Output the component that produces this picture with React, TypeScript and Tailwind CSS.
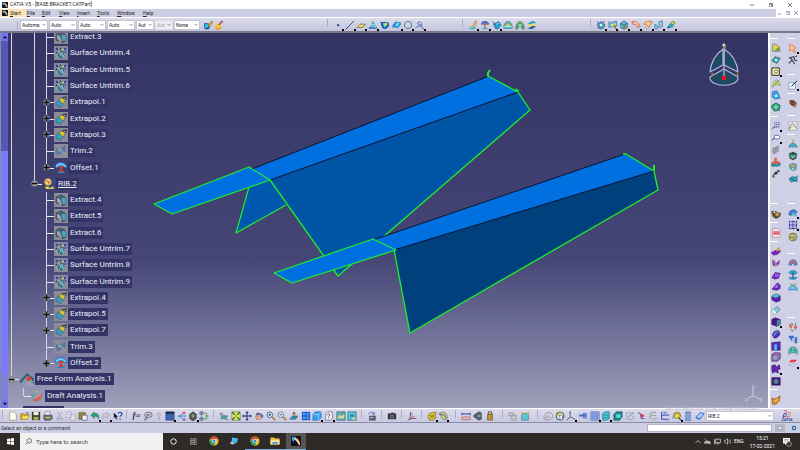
import type { ReactNode } from "react";
import clsx from "clsx";

// ====================================
// Glyphs, all drawn on a 12x12 grid
// ====================================
const glyphs: Record<string, ReactNode> = {
   // render style
   painter: (
      <>
         <path d="M1 4h5l3 2-2 5H2z" fill="#1c4f9e" />
         <path d="M2 5l4 0 1 3-4 2z" fill="#35c8e8" />
         <path d="M6 6l5-5 1 1-4 6z" fill="#e3b52c" stroke="#5d4200" strokeWidth=".5" />
      </>
   ),
   wizard: (
      <>
         <circle cx="5" cy="8" r="3.4" fill="#f2c62f" />
         <path d="M2 10c2 2 5 1 6-1" stroke="#d66a1b" fill="none" />
         <path d="M6 6l4-5" stroke="#c0392b" strokeWidth="1.6" />
         <path d="M9 1l2 2" stroke="#7a4cd0" />
      </>
   ),
   // wireframe
   point: <rect x="5" y="5" width="2.4" height="2.4" fill="#12448c" />,
   line: <path d="M1 11L11 1" stroke="#17386e" strokeWidth="1" />,
   plane: (
      <path d="M1 9l4-4h6l-3 4z" fill="#f0de6c" stroke="#4d4a20" strokeWidth=".7" />
   ),
   extrude: (
      <>
         <path d="M1 10c3-2 5 1 10-1" stroke="#1c5fa8" strokeWidth="1.6" fill="none" />
         <path d="M3 7c2-1 4 1 6-1M4 4c1-1 3 1 4 0" stroke="#2fbcd6" strokeWidth="1.7" fill="none" />
         <path d="M6 1v4" stroke="#7e8ea0" />
      </>
   ),
   sweep: (
      <>
         <path d="M1 3l4-1 5 1 1 4-4 4-4-1z" fill="#1c55b4" />
         <path d="M3 4l4 0 1 3-3 2z" fill="#3fe0d0" />
         <circle cx="7" cy="5" r="1.6" fill="#f2e53c" />
         <path d="M1 2l2 6" stroke="#163a52" />
      </>
   ),
   fill: (
      <>
         <path d="M1 7l4-4 5-1 1 3-4 5-4-1z" fill="#2a8fe4" />
         <path d="M4 6l3-3 2 1-3 4z" fill="#5ef0e4" />
         <path d="M1 9c0-3 2-6 5-7" stroke="#1b3f9a" fill="none" />
      </>
   ),
   circle: <circle cx="6" cy="6" r="4.4" fill="none" stroke="#4a7d92" strokeWidth="1.1" />,
   spline: (
      <path d="M1 10c0-4 6-1 7-4S4 1 3 4c0 2 4 1 5 3s1 4 3 4" fill="none" stroke="#3f5fb0" strokeWidth="1.1" />
   ),
   // shape tools
   join: (
      <>
         <path d="M1 10l3-3 6 1-2 3H2z" fill="#39b8c8" />
         <path d="M5 8l4-7 2 1-3 6z" fill="#f0a868" stroke="#a05a20" strokeWidth=".4" />
         <path d="M1 8l3 1 5-2" stroke="#e8e070" fill="none" />
      </>
   ),
   offset: (
      <>
         <path d="M1 5c1-5 9-5 10 0l-2 1c-1-3-5-3-6 0z" fill="#3d68c8" />
         <path d="M3 11c1-3 5-3 6 0z" fill="#2fb6d0" />
         <path d="M6 9V4M4.5 6L6 4l1.500 2" stroke="#e04a1c" strokeWidth="1.300" fill="none" />
      </>
   ),
   bucket: (
      <>
         <path d="M2 5l6-3 3 4-4 5-3-1z" fill="#24a5cc" stroke="#15506e" strokeWidth=".7" />
         <path d="M1 2l3 4" stroke="#20406a" />
         <path d="M5 5l3-1" stroke="#8ef0f4" />
      </>
   ),
   dome: (
      <>
         <path d="M1 10c-1-11 11-11 10 0z" fill="#38c4cc" stroke="#24606e" strokeWidth=".6" />
         <path d="M3 7c0-4 6-4 6 0z" fill="#f4de55" />
         <path d="M3 6c1-2 5-2 6 0" stroke="#e05a28" fill="none" />
         <path d="M1 8h10" stroke="#c8f4f4" />
      </>
   ),
   dome2: (
      <>
         <path d="M1 11c0-12 10-12 10 0l-3-1c0-4-4-4-4 0z" fill="#5aa864" stroke="#286048" strokeWidth=".6" />
         <path d="M4 7c0-3 4-3 4 0z" fill="#80e4ec" />
      </>
   ),
   layers: (
      <>
         <path d="M1 4l6-3 4 2-6 3z" fill="#2a9fd0" />
         <path d="M1 7l6-3 4 1-6 4z" fill="#f2e048" />
         <path d="M1 10l6-3 4 1-6 3z" fill="#1b5fae" />
      </>
   ),
   gearbox: (
      <>
         <circle cx="6" cy="6.500" r="4.200" fill="#3ea7b8" stroke="#2b4468" strokeDasharray="2 1" />
         <path d="M1 2l3 2M10 1L8 4M2 10l3-2" stroke="#7a50c8" strokeWidth="1.200" />
         <circle cx="6" cy="6" r="1.500" fill="#e8ffff" />
      </>
   ),
   patch: (
      <>
         <path d="M1 2l4 1 5-2 1 6-4 1-6 1z" fill="#64b4e8" stroke="#3460b0" strokeWidth=".6" />
         <path d="M3 4l3 1 3-2v4l-5 1z" fill="#d4e868" />
         <path d="M7 6l3 5" stroke="#a06820" strokeWidth="1.500" />
      </>
   ),
   cubeLens: (
      <>
         <path d="M2 4l4-3 4 3v5l-4 2-4-2z" fill="#58c0d4" stroke="#1e4e70" strokeWidth=".8" />
         <path d="M2 4l4 2 4-2M6 6v5" stroke="#1e4e70" strokeWidth=".8" fill="none" />
         <path d="M7 7l3 3" stroke="#d07828" strokeWidth="1.500" />
      </>
   ),
   ribbon: (
      <path d="M1 2c4-1 8 0 10 6l-3 1c-1-3-2-4-6-4z" fill="#f2c4a4" stroke="#c04440" strokeWidth=".8" />
   ),
   ribbon2: (
      <>
         <path d="M1 5c2-4 6-4 10-3L7 9C6 7 4 5 1 5z" fill="#f6cf84" stroke="#d0483c" strokeWidth=".8" />
         <path d="M3 9l2 2" stroke="#48a868" />
      </>
   ),
   mirror: (
      <path d="M1 10V5l3 2v4zM6 9V2l4-1v7z" fill="#7fd4e8" stroke="#31588c" strokeWidth=".7" />
   ),
   curveFit: (
      <>
         <path d="M1 9l4-5 6-1-3 6-4 1z" fill="#2f9fd0" />
         <path d="M5 5l3-4 3 2-3 3z" fill="#b8d850" stroke="#1d5030" strokeWidth=".5" />
         <circle cx="3" cy="9" r="1" fill="#1c2f60" />
      </>
   ),
   // standard
   newFile: <path d="M2 1h5l3 3v7H2z" fill="#fffff0" stroke="#7f7f60" strokeWidth=".7" />,
   open: (
      <>
         <path d="M1 10V3h3l1 1h4v2" fill="#e8bb38" stroke="#6e5514" strokeWidth=".6" />
         <path d="M1 10l2-5h9l-3 5z" fill="#f8d84c" stroke="#7a5c10" strokeWidth=".6" />
         <path d="M7 2c2-1 3 0 3 2" stroke="#333" strokeWidth=".7" fill="none" />
      </>
   ),
   save: (
      <>
         <path d="M1 1h10v10H1z" fill="#3a4028" />
         <path d="M3 1h6v4H3z" fill="#eceee0" />
         <path d="M3 7h6v4H3z" fill="#a8a85c" />
      </>
   ),
   print: (
      <>
         <path d="M3 1h6l-1 4H2z" fill="#fff" stroke="#444" strokeWidth=".6" />
         <path d="M1 5h10v4l-2 2H2L1 9z" fill="#6c7078" stroke="#28303a" strokeWidth=".6" />
         <path d="M3 8h6" stroke="#e6d84a" strokeWidth="1.200" />
      </>
   ),
   cut: (
      <>
         <path d="M3 1l4 7M8 1L4 8" stroke="#9b9bac" strokeWidth=".9" />
         <circle cx="3.500" cy="9.500" r="1.400" fill="none" stroke="#9b9bac" />
         <circle cx="8" cy="9.500" r="1.400" fill="none" stroke="#9b9bac" />
      </>
   ),
   copy: (
      <path d="M1 1h5v7H1zM5 4h6v7H5z" fill="#e3e3ee" stroke="#9a9aac" strokeWidth=".7" />
   ),
   paste: (
      <>
         <path d="M1 2h8v8H1z" fill="#a8842c" stroke="#54401a" strokeWidth=".6" />
         <path d="M3 1h4v2H3z" fill="#888" />
         <path d="M5 5h6v6H5z" fill="#f4f4f8" stroke="#2c4894" strokeWidth=".7" />
      </>
   ),
   undo: (
      <path d="M1 5l4-4v2c4-1 7 2 5 7 0-3-2-4-5-3v2z" fill="#2f9f74" stroke="#1d6950" strokeWidth=".5" />
   ),
   redo: (
      <path d="M11 5L7 1v2C3 2 0 5 2 10c0-3 2-4 5-3v2z" fill="#c8c8d4" stroke="#9898a8" strokeWidth=".6" />
   ),
   help: (
      <>
         <path d="M1 2l5 5-2 0 1 3-1.500 0-1-3L1 9z" fill="#10142c" />
         <path d="M6 3c0-2 5-2 5 0 0 2-2.500 2-2.500 4M8.500 9v1.500" stroke="#2c50b0" strokeWidth="1.500" fill="none" />
      </>
   ),
   // knowledge
   comment: (
      <>
         <ellipse cx="6.500" cy="4.500" rx="4.500" ry="3.200" fill="#dcdce8" stroke="#3c3c48" strokeWidth=".8" />
         <path d="M4 7l-2 4 4-3M4 4h5M4 5.500h4" stroke="#3c3c48" strokeWidth=".7" fill="none" />
      </>
   ),
   bulbOff: (
      <>
         <circle cx="6" cy="4" r="2.300" fill="#c6c6d4" stroke="#a8a8b8" strokeWidth=".6" />
         <path d="M5 7h2v4H5z" fill="#b0b0c0" />
      </>
   ),
   table: (
      <>
         <path d="M1 1h10v10H1z" fill="#3c5fae" stroke="#242e5c" strokeWidth=".6" />
         <path d="M1 1h10v2.500H1z" fill="#1f2f4c" />
         <path d="M2 6h8M2 8.500h8M4.500 4v7" stroke="#4f72bc" strokeWidth=".5" />
      </>
   ),
   treeGraph: (
      <>
         <path d="M3 6l4-3M3 6h5M3 6l4 4" stroke="#3468b8" strokeWidth=".9" />
         <path d="M1 5h3v2.500H1zM8 5h3v2H8z" fill="#3fa0d4" />
         <path d="M7 1h3v2.500H7z" fill="#d04a80" />
         <path d="M7 9h3v2.500H7z" fill="#8058c0" />
      </>
   ),
   lockCube: (
      <>
         <path d="M2 4l4-3 4 3v5l-4 3-4-3z" fill="#4c5450" stroke="#20262a" strokeWidth=".6" />
         <circle cx="6" cy="6" r="2" fill="#9a9c80" />
      </>
   ),
   structure: (
      <>
         <path d="M1 1h4v3H1zM1 8h4v3H1z" fill="#68a4a0" stroke="#3e5860" strokeWidth=".6" />
         <path d="M3 4v4M6 2.500h3v7H6" stroke="#606878" strokeWidth=".8" fill="none" />
         <path d="M8 5h3v2.500H8z" fill="#60b060" />
      </>
   ),
   // view
   fly: (
      <>
         <path d="M1 2l3 3 7 1-3 2 3 3-5-2-4 1 1-3z" fill="#40a4ac" stroke="#466484" strokeWidth=".5" />
         <path d="M1 3h4" stroke="#c05c60" />
      </>
   ),
   fitAll: (
      <>
         <path d="M1 1h10v10H1z" fill="#e8e860" stroke="#507038" strokeWidth=".7" />
         <path d="M1.500 1.500l3 3M10.500 1.500l-3 3M1.500 10.500l3-3M10.500 10.500l-3-3" stroke="#1d5c38" strokeWidth="1.300" />
         <circle cx="6" cy="6" r="1" fill="#2f7448" />
      </>
   ),
   pan: (
      <path d="M6 0l2 2.500H6.700v2.800h2.800V4L12 6 9.500 8V6.700H6.700v2.800H8L6 12 4 9.500h1.300V6.700H2.500V8L0 6l2.500-2v1.300h2.800V2.500H4z" fill="#263c74" />
   ),
   rotate: (
      <>
         <path d="M2 4c2-3 7-2 8 1l1-1v4H8l1-1C7 4 5 4 4 6z" fill="#60688c" />
         <path d="M2 6h6c2 1 1 4-1 4H3z" fill="#e8b0a0" stroke="#9c4c48" strokeWidth=".6" />
      </>
   ),
   zoomIn: (
      <>
         <circle cx="4.500" cy="4.500" r="3.300" fill="#e8f4fc" stroke="#2c4c88" />
         <path d="M3 4.500h3M4.500 3v3" stroke="#163060" />
         <path d="M7 7l4 4" stroke="#a87830" strokeWidth="1.800" />
      </>
   ),
   zoomOut: (
      <>
         <circle cx="4.500" cy="4.500" r="3.300" fill="#e8f4fc" stroke="#587088" />
         <path d="M3 4.500h3" stroke="#163060" />
         <path d="M7 7l4 4" stroke="#a87830" strokeWidth="1.800" />
      </>
   ),
   normal: (
      <>
         <path d="M1 10l3-4h7l-3 4z" fill="#2c98b4" stroke="#20506c" strokeWidth=".5" />
         <path d="M6 8V2M4 4l2-3 2 3" stroke="#8c6038" strokeWidth="1.200" fill="none" />
      </>
   ),
   multiView: (
      <>
         <path d="M1 1h10v10H1z" fill="#2348c8" />
         <path d="M2 2h3.500v3.500H2zM6.500 2H10v3.500H6.500zM2 6.500h3.500V10H2zM6.500 6.500H10V10H6.500z" fill="#3fa0f0" />
      </>
   ),
   cube: (
      <>
         <path d="M1 4l3-3h7v7l-3 3H1z" fill="#38a0f0" stroke="#1c54b0" strokeWidth=".6" />
         <path d="M1 4h7v7M8 4l3-3" stroke="#bfe6ff" strokeWidth=".8" fill="none" />
      </>
   ),
   cubeQuery: (
      <>
         <path d="M2 3l2-2h6v8l-2 2H2z" fill="#f2f2fa" stroke="#4c4c64" strokeWidth=".7" />
         <path d="M4 5c0-2 3-1.500 3 0 0 1-1.500 1-1.500 2M5.500 8v1" stroke="#3c3c88" fill="none" />
      </>
   ),
   photo: (
      <>
         <path d="M1 1h10v10H1z" fill="#50b8c8" stroke="#405870" strokeWidth=".8" />
         <path d="M2 8l3-4 2 2 3-2v5H2z" fill="#dcd88c" />
         <path d="M5 5l4-3" stroke="#a05c30" />
      </>
   ),
   photo2: (
      <>
         <path d="M1 1h10v10H1z" fill="#58c8dc" stroke="#405870" strokeWidth=".8" />
         <path d="M3 7c1-4 5-4 6 0z" fill="#2c8890" />
         <path d="M6 8h4v2H6z" fill="#e6dc80" />
      </>
   ),
   swapCube: (
      <>
         <path d="M3 6h7v5H3z" fill="#686878" stroke="#2c2c3c" strokeWidth=".6" />
         <path d="M2 4c0-3 6-3 7-1M8 1l1 3-3 0" stroke="#4868b0" fill="none" />
         <path d="M4 8h3" stroke="#e8e8f0" />
      </>
   ),
   camera: (
      <>
         <path d="M1 3h3l1-1h3l1 1h2v7H1z" fill="#34343c" />
         <circle cx="6" cy="6.500" r="2.300" fill="#8a8a98" />
         <circle cx="6" cy="6.500" r="1" fill="#202028" />
      </>
   ),
   axisRed: (
      <>
         <path d="M4 1v8h7M1 11l3-2" stroke="#6c6070" strokeWidth="1.200" fill="none" />
         <path d="M6 2v5h3" stroke="#a86870" fill="none" />
         <circle cx="4" cy="9" r="1.200" fill="#9c4048" />
      </>
   ),
   material: (
      <>
         <path d="M1 6c1-3 3-4 5-4l5-1-1 4 1 3-4 3H3z" fill="#dcc838" stroke="#5c5420" strokeWidth=".7" />
         <path d="M3 5l6 3M4 8l5-4" stroke="#6c6424" />
      </>
   ),
   material2: (
      <>
         <path d="M1 3l6-2 4 4v4l-4 2-3-4z" fill="#ccd46c" stroke="#48546c" strokeWidth=".7" />
         <path d="M2 4l6 1 2 4" stroke="#6858c0" strokeWidth="1.200" fill="none" />
      </>
   ),
   measure: (
      <>
         <path d="M1 2v3M11 2v3M1 3.500h10" stroke="#2c3ca0" strokeWidth="1.100" />
         <path d="M1 7h10v3.500H1z" fill="#e8b0ac" stroke="#8c5054" strokeWidth=".6" />
      </>
   ),
   measureItem: (
      <>
         <path d="M1 5l6-4 3 1v8l-3 1-6-4z" fill="#5c6068" stroke="#2c3038" strokeWidth=".6" />
         <path d="M6 5l4 1-4 1z" fill="#b8e4e0" />
      </>
   ),
   weight: (
      <>
         <path d="M4 1h4v3H4z" fill="none" stroke="#504018" />
         <path d="M3 4h6v7H3z" fill="#bc9430" stroke="#504018" strokeWidth=".6" />
      </>
   ),
   boxesOff: (
      <path d="M1 2h6v4H1zM4 5h6v6H4z" fill="#c8c8c8" stroke="#94949c" strokeWidth=".8" />
   ),
   catalog: (
      <>
         <path d="M2 3h8v8H2z" fill="#5cc8d4" stroke="#3c6470" strokeWidth=".7" />
         <path d="M1 1h3v3H1zM8 1h3v3H8z" fill="#d8b868" />
      </>
   ),
   swirl: (
      <path d="M6 6c1-1 2 1 0 2S2 7 3 4s6-3 8 0-1 7-5 7-5-2-5-4" fill="none" stroke="#8c8c98" strokeWidth="1.100" />
   ),
   palette: (
      <>
         <circle cx="6" cy="6" r="4.800" fill="#cfe6dc" stroke="#243c58" />
         <path d="M2 6c1-4 4-5 7-3" stroke="#b49c2c" strokeWidth="1.400" fill="none" />
         <path d="M5 5l2 6h2V6z" fill="#fff" stroke="#304048" strokeWidth=".6" />
      </>
   ),
   axes: (
      <path d="M5 1v6l6 3M5 7l-4 4M4 2l1-1 1 1" stroke="#4c4c54" strokeWidth="1" fill="none" />
   ),
   swap: (
      <>
         <path d="M1 4h5l0-2 5 0v7l-5 0V7H1z" fill="#7094d8" />
         <path d="M2 5.500h7M7 3v5" stroke="#3c58b4" />
      </>
   ),
   grid: (
      <path d="M1 1h10v10H1zM1 3.500h10M1 6h10M1 8.500h10M3.500 1v10M6 1v10M8.500 1v10" fill="#ccdcfc" stroke="#4064c0" strokeWidth=".8" />
   ),
   cylinder: (
      <>
         <path d="M2 3l3-2h5v8l-3 2H2z" fill="#44c4d0" stroke="#246870" strokeWidth=".7" />
         <path d="M2 5h8M2 8h8" stroke="#1c7c88" strokeWidth=".6" />
      </>
   ),
   tealBox: (
      <>
         <path d="M1 4l3-3h7v6l-3 4H1z" fill="#1c8c94" stroke="#104c54" strokeWidth=".7" />
         <path d="M4 4h5v4H4z" fill="#68dce0" />
      </>
   ),
   dashSquare: (
      <>
         <path d="M2 2h8v8H2z" fill="none" stroke="#686c78" strokeWidth=".8" strokeDasharray="1.500 1.500" />
         <path d="M4 8l5-6" stroke="#3c8ca0" />
      </>
   ),
   branch: (
      <>
         <path d="M1 1l4 4h3M5 5v4h4" stroke="#3c58b4" strokeWidth="1.200" fill="none" />
         <path d="M3 2l6 4-4 2z" fill="#d42c3c" />
      </>
   ),
   sheetsOff: (
      <path d="M2 5c0-4 5-4 8-3M2 9c0-4 5-5 8-3M5 11c1-2 3-2 6-2" stroke="#a4a8a4" strokeWidth="1.500" fill="none" />
   ),
   listTree: (
      <>
         <path d="M2 1v9h4M2 5h4" stroke="#3c50b0" strokeWidth="1.200" fill="none" />
         <path d="M4 1h4v2H4zM6 4h5v2H6zM6 9h5v2H6z" fill="#6c84dc" />
      </>
   ),
   lensYellow: (
      <>
         <circle cx="6" cy="5" r="4" fill="#e8d834" stroke="#787428" strokeWidth=".7" />
         <path d="M1 9c1-7 7-9 10-2" stroke="#6858b0" fill="none" />
         <path d="M8 8l3 3" stroke="#303870" strokeWidth="1.300" />
      </>
   ),
   stack: (
      <path d="M3 1h6v2.500H3zM3 5h6v2.500H3zM3 9h6v2.500H3z" fill="#80a8e8" stroke="#4460b0" strokeWidth=".6" />
   ),
   eraser: (
      <>
         <path d="M1 8l5-6 5 1-5 7z" fill="#a4ccf8" stroke="#2c58c4" strokeWidth=".9" />
         <path d="M1 8l5 2" stroke="#2c58c4" />
      </>
   ),
   // right column
   yellowSolid: (
      <>
         <path d="M2 2l3-1 5 4 1 5-9 0z" fill="#e4d838" stroke="#6858a0" strokeWidth=".8" />
         <path d="M4 9l6 0-1-4z" fill="#409c48" />
      </>
   ),
   diamondTeal: (
      <>
         <path d="M1 7l4-5 6 2-4 6z" fill="#2ca8c8" stroke="#1c5878" strokeWidth=".8" />
         <circle cx="6" cy="6" r="1.600" fill="#f4ecb0" />
         <path d="M5 1v2M7 9v2" stroke="#c08020" />
      </>
   ),
   frameYellow: (
      <>
         <path d="M1 1h9v9H1z" fill="#f4e888" stroke="#242c40" strokeWidth="1.100" />
         <circle cx="6" cy="5.500" r="1.800" fill="#fff" stroke="#303860" strokeWidth=".8" />
      </>
   ),
   tentYellow: (
      <>
         <path d="M1 11l5-9 4 3 1 4-4-2z" fill="#d8dc54" stroke="#607838" strokeWidth=".6" />
         <path d="M5 7l5-5" stroke="#389c88" />
      </>
   ),
   blueBlob: (
      <>
         <path d="M2 2l5-1 2 3 2 6-6 1-4-3z" fill="#38a0e4" stroke="#1c5c9c" strokeWidth=".6" />
         <path d="M4 6l4-1 0 3-3 1z" fill="#b4f4f0" />
      </>
   ),
   greenGear: (
      <>
         <path d="M1 4l5-3 5 3-1 6-6 1-3-4z" fill="#24a090" stroke="#14504c" strokeWidth=".7" />
         <path d="M3 6h6M6 3v6" stroke="#e4e060" strokeWidth="1.200" />
         <circle cx="6" cy="6" r="1.200" fill="#50e0f0" />
      </>
   ),
   textNote: (
      <>
         <path d="M4 2h7M4 4.500h7M4 7h6" stroke="#586098" strokeWidth="1.300" strokeDasharray="1.500 .6" />
         <path d="M1 9l4-2" stroke="#303870" />
      </>
   ),
   flagNote: (
      <>
         <path d="M4 3h5l2 2-2 2H4z" fill="#fff" stroke="#585c98" strokeWidth=".9" />
         <path d="M4 6L1 9" stroke="#303870" strokeWidth="1.200" />
      </>
   ),
   greySolid: <path d="M2 4l7-3v6l-5 4-2-2z" fill="#9898a0" stroke="#84848c" strokeWidth=".6" />,
   stamp: (
      <>
         <path d="M1 7h10v3l-3 1H1z" fill="#2c98a8" stroke="#1c4c58" strokeWidth=".6" />
         <path d="M4 1h3v4h3v3H2V5h2z" fill="#e85c48" />
      </>
   ),
   link: (
      <>
         <path d="M2 9l3-4M6 5l3-3" stroke="#303838" strokeWidth="1.400" />
         <circle cx="3" cy="9" r="1.600" fill="#607868" />
         <circle cx="6" cy="5" r="1.600" fill="#203028" />
         <circle cx="9" cy="2.500" r="1.500" fill="#485850" />
      </>
   ),
   robot: (
      <>
         <path d="M0 3l4-1 8 3-1 4-5 3-4-3z" fill="#544c38" />
         <path d="M5 5l5-1-1 4-3 1z" fill="#d89848" />
         <circle cx="4" cy="4" r="1.200" fill="#e8e4d0" />
      </>
   ),
   pdf: (
      <>
         <path d="M2 1h6l3 2v8H2z" fill="#f8f0f4" stroke="#98707c" strokeWidth=".7" />
         <path d="M3 4h7v4H3z" fill="#e43c50" />
         <path d="M4 6h5" stroke="#fff" strokeWidth=".7" />
      </>
   ),
   purplePad: (
      <>
         <path d="M0 8l6-3 6 1-4 4-5 1z" fill="#7820c0" stroke="#401070" strokeWidth=".5" />
         <path d="M6 5l4-4 1 2-3 4z" fill="#c0a830" />
      </>
   ),
   purpleSplit: (
      <>
         <path d="M1 2l4 3v5L2 9zM6 6l5-4-1 5-3 3z" fill="#8040c8" />
         <path d="M2 2l3 2 1 7" stroke="#b0a838" strokeWidth="1.400" fill="none" />
      </>
   ),
   purpleWedge: (
      <>
         <path d="M1 9l4-6 6 1-2 6-5 1z" fill="#7028c8" stroke="#38106c" strokeWidth=".6" />
         <path d="M5 4l5 1-1 3-5 0z" fill="#a458e4" />
      </>
   ),
   purpleRamp: (
      <>
         <path d="M1 10l7-8 3 3v4l-4 2z" fill="#6c24bc" stroke="#38106c" strokeWidth=".6" />
         <path d="M4 8l4-4v4z" fill="#b47cec" />
      </>
   ),
   purpleTeal: (
      <>
         <path d="M1 4l5-3 5 2v6l-5 2-5-3z" fill="#5c20a8" stroke="#281054" strokeWidth=".6" />
         <path d="M1 4l5-3 5 2-5 3z" fill="#48c4cc" />
      </>
   ),
   tealTube: (
      <>
         <path d="M1 8l6-6 4 3-6 6z" fill="#78d4dc" stroke="#585878" strokeWidth=".8" />
         <path d="M1 8l4 3 1-2-3-3z" fill="#f4fcfc" />
      </>
   ),
   purpleBlock: (
      <>
         <path d="M1 3l4-2 6 2v6l-4 2-6-2z" fill="#4c1890" stroke="#1c0c3c" strokeWidth=".7" />
         <path d="M7 4l4-1v6l-4 2z" fill="#3c8c98" />
      </>
   ),
   purpleRoll: (
      <>
         <path d="M2 8c-1-3 3-7 7-6l2 3c-1 4-4 6-7 6z" fill="#5c28b8" stroke="#1c2c5c" strokeWidth=".6" />
         <path d="M4 8c0-3 2-4 4-5" stroke="#34b8cc" strokeWidth="1.600" fill="none" />
      </>
   ),
   purpleDoor: (
      <>
         <path d="M1 2l10-1v10H1z" fill="#5828c4" stroke="#202060" strokeWidth=".7" />
         <path d="M4 4h3v7H4z" fill="#50c8e8" />
      </>
   ),
   purpleFrame: (
      <>
         <path d="M1 3l3-2h7v7l-3 3H1z" fill="#9c68b8" stroke="#3c3050" strokeWidth=".8" />
         <path d="M3 5h4v4H3z" fill="#7cb8bc" />
      </>
   ),
   purpleCluster: (
      <path d="M1 2l4-1 1 3 4-3 1 5-3 1 1 4-4-2-3 2-1-4z" fill="#6824b4" stroke="#30105c" strokeWidth=".7" />
   ),
   purpleRing: (
      <>
         <path d="M1 2h10v9H1z" fill="#481888" stroke="#200c3c" strokeWidth=".7" />
         <circle cx="6" cy="6.500" r="3" fill="#2c8c80" />
         <circle cx="6" cy="6.500" r="1.300" fill="#e85c98" />
      </>
   ),
   orangeBlob: (
      <>
         <path d="M1 4l4 1 6-4-1 6-4 4H2z" fill="#e08c28" stroke="#7c4410" strokeWidth=".7" />
         <path d="M4 8l4-3" stroke="#f8d070" strokeWidth="1.300" />
      </>
   ),
   cursor: (
      <path d="M2 1l8 5-3 1 2 4-2 1-2-4-3 2z" fill="#f8c49c" stroke="#dc7438" strokeWidth=".9" />
   ),
   walk: (
      <path d="M1 10l4-4-2-3 4-1 1 4 3 1M5 6l3 5M9 2l2-1M1 4l2-1" stroke="#2c3c40" strokeWidth="1.300" fill="none" />
   ),
   sketch: (
      <>
         <path d="M1 3h8v8H1z" fill="#f8fcfc" stroke="#708898" strokeWidth=".8" />
         <path d="M3 8c3 0 1-3 4-4" stroke="#3c9cac" fill="none" />
         <path d="M5 7l6-6" stroke="#303848" strokeWidth="1.200" />
      </>
   ),
   hand: (
      <>
         <path d="M1 5l3-3 4 1 3 4-2 4-5-2z" fill="#8c5c48" />
         <path d="M2 3l7 3M3 7l6 1" stroke="#302424" />
         <path d="M7 6l3 2-1 2z" fill="#f0a068" />
      </>
   ),
   graph: (
      <>
         <path d="M1 1h10v10H1z" fill="#f4f0dc" stroke="#88889c" strokeWidth=".6" />
         <path d="M2 10c2-10 4-8 8-1" stroke="#3858dc" fill="none" />
         <path d="M2 9l8-5" stroke="#d8b828" />
      </>
   ),
   tealFan: (
      <>
         <path d="M1 10c1-4 3-5 5-5s4 1 5 5l-3-1-2 1-2-1z" fill="#38b4c0" stroke="#1c6070" strokeWidth=".6" />
         <path d="M6 5V1" stroke="#c09428" strokeWidth="1.400" />
      </>
   ),
   tealCrown: (
      <>
         <path d="M1 3l5-2 5 2-1 6-4 2-4-2z" fill="#2c5448" />
         <path d="M2 4l4 1 4-1-2 4-4 0z" fill="#30b4b4" />
         <path d="M3 7l5 0-1 2z" fill="#e0c44c" />
      </>
   ),
   orangeCrown: (
      <>
         <path d="M1 3l5-2 5 2-1 6-4 2-4-3z" fill="#3c9cb0" />
         <path d="M2 3l5 0 3 2-5 2z" fill="#e49848" />
         <path d="M4 8l4-1-2 3z" fill="#f0e070" />
      </>
   ),
   tealFish: (
      <>
         <path d="M1 6l4-3 4 1 2-2v7l-3-1-4 2z" fill="#30a4b8" stroke="#1c5468" strokeWidth=".6" />
         <path d="M3 5l6 4" stroke="#183c50" />
      </>
   ),
   magnet: (
      <>
         <path d="M1 8c0-6 8-8 10-3l-2 2c-2-3-5-1-5 2z" fill="#3c88d8" stroke="#1c4080" strokeWidth=".6" />
         <path d="M4 9l4-2 2 3" stroke="#2cb0b8" strokeWidth="1.400" fill="none" />
      </>
   ),
   blueDots: (
      <path d="M1 2h10M1 6h10M1 10h10M2 1v10M6 1v10M10 1v10" stroke="#3838a0" strokeWidth="1.300" strokeDasharray="2 .8" fill="none" />
   ),
   globe: (
      <>
         <circle cx="6" cy="6" r="4.800" fill="#a49c54" stroke="#4c4830" strokeWidth=".6" />
         <path d="M2 5c3-3 5 2 8-1M3 9l4-2 3 1" stroke="#f0e8a8" fill="none" />
         <circle cx="7" cy="7" r="1.400" fill="#50a0a8" />
      </>
   ),
   rainbow: (
      <>
         <path d="M1 8c0-8 10-8 10 0l-3 1c0-3-4-3-4 0z" fill="#4888dc" stroke="#2850a0" strokeWidth=".5" />
         <path d="M3 7c0-4 6-4 6 0" stroke="#e86438" strokeWidth="1.500" fill="none" />
      </>
   ),
   tealSpring: (
      <>
         <path d="M1 3c2-3 8-3 10 0l-2 2H3zM1 9h10l-2 2H3z" fill="#30a8d0" stroke="#1c5c84" strokeWidth=".6" />
         <path d="M6 3v7" stroke="#285078" strokeWidth="1.400" />
      </>
   ),
   domeLow: (
      <>
         <path d="M1 8c1-5 9-5 10 0v2c-3-1-7-1-10 0z" fill="#68b4f0" stroke="#3058a8" strokeWidth=".6" />
         <path d="M3 8c1-3 5-3 6 0z" fill="#60dcc0" />
         <path d="M2 2l4 2 4-2" stroke="#70a030" fill="none" />
      </>
   ),
   footprints: (
      <>
         <path d="M1 4l2-2 2 4-2 2zM7 6l2-3 2 3-2 4z" fill="#dc5c50" />
         <path d="M4 1l2 3M9 1v2M3 9l4 2" stroke="#58a060" strokeWidth="1.300" />
      </>
   ),
   blueStairs: (
      <>
         <path d="M1 2h6v3H5v3H3V5H1zM8 4h3v7H8z" fill="#3c6cc8" />
         <path d="M4 8h5" stroke="#68b8dc" strokeWidth="1.300" />
      </>
   ),
   tealNet: (
      <>
         <path d="M1 4c3-4 7-4 10 0v6c-3-3-7-3-10 0z" fill="#68ccb8" stroke="#2c7c7c" strokeWidth=".8" />
         <path d="M1 7c3-3 7-3 10 0M4 2v6M8 2v6" stroke="#2c7c7c" strokeWidth=".8" fill="none" />
      </>
   ),
   redSheet: (
      <>
         <path d="M1 5l3-3h7l-3 3z" fill="#e83c3c" />
         <path d="M1 9l3-2h7l-3 3z" fill="#dce0ec" stroke="#8088a0" strokeWidth=".5" />
      </>
   ),
   // tree nodes
   nodeExtract: (
      <>
         <path d="M1 3l5-2 4 2v8l-3 1V6L4 5v5L1 9z" fill="#4c6074" stroke="#303c4c" strokeWidth=".6" />
         <path d="M2 4l3 1v5L2 8z" fill="#98a4b0" />
         <path d="M6 5l3-2 2 2v5l-3 1z" fill="#48a8c8" stroke="#1c4c68" strokeWidth=".5" />
         <path d="M5 8l2 1-1 2z" fill="#c0a048" />
      </>
   ),
   nodeUntrim: (
      <>
         <path d="M3 4c2-2 4 1 6 0l1 5c-1 3-6 3-7 1z" fill="#3c7484" />
         <path d="M4 4c-1 3 3 2 2 5M7 5c-1 2 2 2 1 5" stroke="#c4e8ec" strokeWidth=".9" fill="none" />
         <path d="M1 7c0 3 2 4 4 4M10 6c1 2 0 4-2 5" stroke="#74b4c4" strokeWidth=".9" fill="none" />
         <path d="M1 1l2 2M11 1L9 3M5 1l1 1M1 5l1 1M10 5h1" stroke="#1c28a0" strokeWidth="1.400" />
         <path d="M7 2l2 1M3 4h1" stroke="#d8d048" strokeWidth="1.200" />
      </>
   ),
   nodeExtrapol: (
      <>
         <path d="M1 7c1-2 3-3 4-3l3 4-3 4-2-3-2 1z" fill="#3a9cc8" stroke="#24506c" strokeWidth=".5" />
         <path d="M4 4c2-3 5-2 6 1l-2 3z" fill="#d4c838" stroke="#4c4c24" strokeWidth=".5" />
         <path d="M7 2l4-1v3" stroke="#303c3c" strokeWidth="1.100" fill="none" />
      </>
   ),
   nodeTrim: (
      <>
         <path d="M1 2l4 2 5-3v5L6 8l-4 2z" fill="#4c80b0" stroke="#4464a8" strokeWidth=".5" />
         <path d="M3 4l4 0-2 3z" fill="#c8ac70" />
         <path d="M1 1l4 4M7 6l3 4" stroke="#9c9c8c" strokeWidth="1.400" />
      </>
   ),
   nodeOffset: (
      <>
         <path d="M0 5c1-6 10-6 12 0l-2 1c-2-3-6-3-8 0z" fill="#68c8f4" stroke="#2050b8" strokeWidth=".7" />
         <path d="M2 11c2-3 6-3 8 0z" fill="#2c88cc" />
         <path d="M6 10V4M4 5h4M4 9h4" stroke="#d83c18" strokeWidth="1.700" fill="none" />
      </>
   ),
   nodeSet: (
      <>
         <circle cx="5" cy="4" r="3.500" fill="#f0d478" stroke="#a86c28" strokeWidth=".6" />
         <path d="M3 3l4 1-2 2" stroke="#d4582c" fill="none" />
         <path d="M2 9c3-2 6 2 8-1l1 3H3z" fill="#e8d840" />
         <path d="M11 1c1 4-1 8-5 9" stroke="#2c60b8" fill="none" />
      </>
   ),
   nodeAnalysis: (
      <>
         <path d="M0 9l6-7 5 4v4" stroke="#2c6074" strokeWidth="1.800" fill="none" />
         <path d="M5 6l3-3 2 3-3 2z" fill="#e04030" />
         <path d="M4 7l2 2" stroke="#48b8b0" strokeWidth="1.500" />
         <path d="M6 12V9h2v3M9 12V8h2v4" stroke="#a8a8bc" strokeWidth=".8" fill="none" />
      </>
   ),
   nodeDraft: (
      <>
         <path d="M1 3l6 3 4-1-3 5-6 1z" fill="#64a0ac" />
         <path d="M3 10l1-3 7-3-2 5-3 2z" fill="#d8605c" />
         <path d="M3 8l6-3" stroke="#f0b0ac" strokeWidth=".7" />
         <path d="M5 1l2 2" stroke="#d8b060" />
      </>
   ),
};

const Glyph = ({ name, className }: { name: string; className?: string }) => (
   <svg viewBox="0 0 12 12" className={clsx("flex-none", className)} aria-hidden="true">
      {glyphs[name]}
   </svg>
);

// ====================================
// Toolbars. A trailing "+" on a name means the tool has a flyout
// ====================================
const Tool = ({ tool }: { tool: string }) => {
   const name = tool.replace("+", "");
   return (
      <button
         type="button"
         aria-label={name}
         className="relative flex min-h-0 min-w-0 flex-1 items-center justify-center"
      >
         {name == "formula" ? (
            <span className="font-['Liberation_Serif',serif] text-[8px] leading-none font-bold italic text-[#26263a]">
               f∞
            </span>
         ) : (
            <Glyph name={name} className="size-[10px]" />
         )}
         {tool.endsWith("+") ? (
            <span className="absolute right-0 bottom-0 h-[2px] w-[2px] bg-black" />
         ) : null}
      </button>
   );
};

const ToolRow = ({ tools, className }: { tools: string; className: string }) => (
   <div className={clsx("flex h-3 flex-none", className)}>
      <span className="mr-1 h-2 w-px flex-none self-start border-r border-[#a9a9c0] bg-white" />
      {tools.split(" ").map((tool) => (
         <Tool tool={tool} key={tool} />
      ))}
   </div>
);

const ToolColumn = ({ tools, className }: { tools: string; className: string }) => (
   <div className={clsx("flex w-3 flex-none flex-col", className)}>
      <span className="mt-[2px] mb-[3px] h-px w-2 flex-none bg-white" />
      {tools.split(" ").map((tool) => (
         <Tool tool={tool} key={tool} />
      ))}
   </div>
);

const Combo = ({
   label,
   value,
   className,
   disabled,
}: {
   label: string;
   value: string;
   className: string;
   disabled?: boolean;
}) => (
   <label className={clsx("relative block h-[10px]", className)}>
      <select
         aria-label={label}
         disabled={disabled}
         className={clsx(
            "block h-full w-full appearance-none border pl-px text-[5px] leading-[8px]",
            disabled
               ? "border-[#dcdce8] bg-[#ececf4] text-[#a0a0a8]"
               : "border-[#c3c3d2] bg-white text-[#222]",
         )}
      >
         <option>{value}</option>
      </select>
      <svg viewBox="0 0 6 4" className="pointer-events-none absolute top-1 right-[2px] h-[2px] w-1">
         <path d="M0 0l3 3 3-3" fill="none" stroke="#555" strokeWidth="1.200" />
      </svg>
   </label>
);

const CatiaMark = ({ className }: { className?: string }) => (
   <svg viewBox="0 0 12 12" className={clsx("flex-none", className)} aria-hidden="true">
      <path d="M0 0h12v12H0z" fill="#0c1020" />
      <path d="M1 1h5L3 7 1 5z" fill="#3c9ce0" />
      <path d="M5 2c3 0 6 4 6 9L8 8 4 4z" fill="#f0a038" />
      <path d="M4 3c3 1 5 4 6 8" stroke="#fff" strokeWidth="1.200" fill="none" />
   </svg>
);

const menus = [
   { name: "File", width: "w-[15px]" },
   { name: "Edit", width: "w-[17px]" },
   { name: "View", width: "w-[18px]" },
   { name: "Insert", width: "w-5" },
   { name: "Tools", width: "w-5" },
   { name: "Window", width: "w-[26px]" },
   { name: "Help", width: "w-5" },
];

const TitleBar = () => (
   <header className="flex h-[9px] flex-none items-center bg-white pl-[2px] text-[5px] leading-none text-[#222]">
      <CatiaMark className="mr-[2px] size-[6px]" />
      <h1 className="flex-1">CATIA V5 - [BASE BRACKET.CATPart]</h1>
      <div className="flex gap-[15px] pr-2">
         <button type="button" aria-label="Minimize">
            <svg viewBox="0 0 4 4" className="size-1"><path d="M0 2h4" stroke="#222" strokeWidth=".6" /></svg>
         </button>
         <button type="button" aria-label="Restore">
            <svg viewBox="0 0 4 4" className="size-1"><path d="M0 1h3v3H0zM1 1V0h3v3H3" fill="none" stroke="#222" strokeWidth=".6" /></svg>
         </button>
         <button type="button" aria-label="Close">
            <svg viewBox="0 0 4 4" className="size-1"><path d="M0 0l4 4M4 0L0 4" stroke="#222" strokeWidth=".6" /></svg>
         </button>
      </div>
   </header>
);

const MenuBar = () => (
   <nav className="flex h-[9px] flex-none items-center border-b border-white bg-[#cdcde4] text-[5px] leading-none text-[#222]">
      <span className="mr-px flex h-full w-[26px] items-center gap-[2px] bg-[#fbe3b3] pl-[2px]">
         <CatiaMark className="size-[6px]" />
         <button type="button" className="first-letter:underline">Start</button>
      </span>
      {menus.map((menu) => (
         <button
            type="button"
            key={menu.name}
            className={clsx("flex-none text-left first-letter:underline", menu.width)}
         >
            {menu.name}
         </button>
      ))}
      <span className="flex h-full flex-1 justify-end">
         <span className="flex h-full w-6 items-center justify-around bg-white">
            <svg viewBox="0 0 4 4" className="size-1"><path d="M0 3h3" stroke="#789" strokeWidth=".8" /></svg>
            <svg viewBox="0 0 4 4" className="size-1"><path d="M0 1h3v3H0zM1 1V0h3v3H3" fill="none" stroke="#789" strokeWidth=".7" /></svg>
            <svg viewBox="0 0 4 4" className="size-1"><path d="M0 0l4 4M4 0L0 4" stroke="#789" strokeWidth=".8" /></svg>
         </span>
      </span>
   </nav>
);

const TopToolbar = () => (
   <div className="flex h-[15px] flex-none items-center border-b-2 border-[#77778c] bg-linear-to-b from-[#dcdcec] to-[#c4c4dc]">
      <div className="flex w-[327px] flex-none items-center gap-px pl-[17px]">
         <span className="mr-px h-2 w-px bg-[#a9a9c0]" />
         <Combo label="Fill colour" value="Automa" className="w-7" />
         <Combo label="Transparency" value="Auto" className="w-7" />
         <Combo label="Line weight" value="Auto" className="w-7" />
         <Combo label="Line type" value="Auto" className="w-7" />
         <Combo label="Point symbol" value="Aut" className="w-[18px]" />
         <Combo label="Rendering" value="Aut" className="w-[18px]" disabled />
         <Combo label="Layer" value="None" className="w-[26px]" />
         <div className="flex h-3 w-6 pl-px">
            <Tool tool="painter" />
            <Tool tool="wizard" />
         </div>
      </div>
      <ToolRow tools="point+ line+ plane+ extrude+ sweep fill+ circle+ spline+" className="w-[135px] pr-9" />
      <ToolRow tools="join+ offset+ bucket+ dome dome2 layers" className="w-[128px] pr-[52px]" />
      <ToolRow tools="gearbox+ patch+ cubeLens+ ribbon+ ribbon2+ mirror+ curveFit+" className="w-[87px]" />
   </div>
);

// ====================================
// Specification tree
// ====================================
type Node = { label: string; icon: string; plus?: boolean; plain?: boolean };
const ribNodes: Node[] = [
   { label: "Extract.3", icon: "nodeExtract" },
   { label: "Surface Untrim.4", icon: "nodeUntrim" },
   { label: "Surface Untrim.5", icon: "nodeUntrim" },
   { label: "Surface Untrim.6", icon: "nodeUntrim" },
   { label: "Extrapol.1", icon: "nodeExtrapol", plus: true },
   { label: "Extrapol.2", icon: "nodeExtrapol", plus: true },
   { label: "Extrapol.3", icon: "nodeExtrapol", plus: true },
   { label: "Trim.2", icon: "nodeTrim" },
   { label: "Offset.1", icon: "nodeOffset", plus: true, plain: true },
];
const rib2Nodes: Node[] = [
   { label: "Extract.4", icon: "nodeExtract" },
   { label: "Extract.5", icon: "nodeExtract" },
   { label: "Extract.6", icon: "nodeExtract" },
   { label: "Surface Untrim.7", icon: "nodeUntrim" },
   { label: "Surface Untrim.8", icon: "nodeUntrim" },
   { label: "Surface Untrim.9", icon: "nodeUntrim" },
   { label: "Extrapol.4", icon: "nodeExtrapol", plus: true },
   { label: "Extrapol.5", icon: "nodeExtrapol", plus: true },
   { label: "Extrapol.7", icon: "nodeExtrapol", plus: true },
   { label: "Trim.3", icon: "nodeTrim" },
   { label: "Offset.2", icon: "nodeOffset", plus: true, plain: true },
];

// One 8px wide cell of the tree's line work
const Guide = ({
   line = "full",
   branch,
   toggle,
   className,
}: {
   line?: "full" | "half" | "none";
   branch?: boolean;
   toggle?: "plus" | "minus";
   className?: string;
}) => (
   <span className={clsx("relative flex w-2 flex-none items-center justify-center self-stretch", className)}>
      {line != "none" ? (
         <span
            className={clsx(
               "absolute top-0 left-[3px] w-px bg-[#d4d4e4]",
               line == "full" ? "h-full" : "h-1/2",
            )}
         />
      ) : null}
      {branch ? <span className="absolute top-1/2 left-1 h-px w-[7px] bg-[#e4e4f0]" /> : null}
      {toggle ? (
         <button type="button" aria-label={toggle == "plus" ? "Expand" : "Collapse"} className="relative -ml-px">
            <svg viewBox="0 0 14 14" className="size-[7px]">
               <circle cx="7" cy="7" r="6" fill="#a0a0a0" stroke="#74747c" strokeWidth="1.500" />
               <path d={toggle == "plus" ? "M1 7h12M7 1v12" : "M2 7h10"} stroke="#0c0c10" strokeWidth="3" />
            </svg>
         </button>
      ) : null}
   </span>
);

const Label = ({ children, current }: { children: ReactNode; current?: boolean }) => (
   <span
      className={clsx(
         "bg-[#333366] px-[2px] text-[8px] leading-[12px] whitespace-nowrap text-[#f0f0f8]",
         current && "underline",
      )}
   >
      {children}
   </span>
);

const NodeRow = ({ node, last, inner }: { node: Node; last: boolean; inner: boolean }) => (
   <li className="flex min-h-0 flex-1 items-center">
      <Guide />
      <Guide className="ml-[15px]" line={inner ? "full" : "none"} />
      <Guide className="mr-[3px] ml-1" line={last ? "half" : "full"} branch toggle={node.plus ? "plus" : undefined} />
      <span className={clsx("flex size-[14px] items-center justify-center", !node.plain && "bg-[#8a8a98]")}>
         <Glyph name={node.icon} className="size-3" />
      </span>
      <Label>{node.label}</Label>
   </li>
);

const Tree = () => (
   <div className="flex h-full w-40 flex-col">
      <ul className="-mt-1 flex h-full flex-none flex-col">
         {ribNodes.map((node, i) => (
            <NodeRow node={node} inner last={i == ribNodes.length - 1} key={node.label} />
         ))}
         <li className="flex min-h-0 flex-1 items-center">
            <Guide />
            <Guide className="mr-1 ml-[15px]" line="half" branch toggle="minus" />
            <Glyph name="nodeSet" className="mr-px size-3" />
            <Label current>RIB.2</Label>
         </li>
         {rib2Nodes.map((node, i) => (
            <NodeRow node={node} inner={false} last={i == rib2Nodes.length - 1} key={node.label} />
         ))}
         <li className="flex min-h-0 flex-1 items-center">
            <Guide className="mr-1" line="half" branch toggle="minus" />
            <Glyph name="nodeAnalysis" className="mr-px size-[14px]" />
            <Label>Free Form Analysis.1</Label>
         </li>
         <li className="flex min-h-0 flex-1 items-center">
            <Guide className="mr-[2px] ml-3" line="half" branch />
            <Glyph name="nodeDraft" className="mr-px size-[14px]" />
            <Label>Draft Analysis.1</Label>
         </li>
      </ul>
      <span className="mt-[2px] ml-[15px] h-3 w-[41px] flex-none bg-[#333366]" />
   </div>
);

const Model = () => (
   <svg viewBox="8 33 760 375" className="absolute inset-0 h-full w-full" role="img" aria-label="Base bracket model">
      <g strokeLinejoin="round">
         <path d="M249 187L236 233L286 205L270 180z" fill="#0057ae" />
         <path d="M249 187L236 233L286 205" fill="none" stroke="#1cf02c" strokeWidth="1.200" />
         <path d="M249 187L270 180" stroke="#0c1430" />
         <path d="M270 180L518 92L530 110L338 276z" fill="#0054a6" />
         <path d="M252 169L489 76L518 92L270 180z" fill="#006fdf" />
         <path d="M252 169L489 76M270 180L518 92" stroke="#0c1430" strokeWidth="1" />
         <path d="M154 204L249 167L270 180L172 214z" fill="#006fdf" stroke="#1cf02c" strokeWidth="1.200" />
         <path d="M488 76L518 92L530 110L338 276L270 180M488 77V73L490 70M516 92L516 89L519 91" fill="none" stroke="#1cf02c" strokeWidth="1.300" />
         <path d="M488 76V73L490 70" fill="none" stroke="#1cf02c" strokeWidth="2" />
         <path d="M394 250L654 171L658 190L410 333z" fill="#00407c" />
         <path d="M373 240L625 154L654 171L394 250z" fill="#006fdf" />
         <path d="M373 240L625 154M394 250L654 171" stroke="#0c1430" strokeWidth="1" />
         <path d="M274 273L373 239L396 250L292 283z" fill="#006fdf" stroke="#1cf02c" strokeWidth="1.200" />
         <path d="M623 154L626 154L654 171L658 190L410 333L394 250M654 171L654 166" fill="none" stroke="#1cf02c" strokeWidth="1.300" />
         <path d="M654 170V165" stroke="#1cf02c" strokeWidth="2" />
      </g>

      {/* compass */}
      <g stroke="#b4b4e0" strokeWidth="1.200" strokeLinejoin="round">
         <path d="M723 49C716 54 711 62 710 72L723 65z" fill="#1d4a60" />
         <path d="M724 49C732 54 737 62 738 72L724 65z" fill="#1d4a60" />
         <path d="M710 77L724 69L738 77C739 88 709 88 710 77z" fill="#1d4a60" />
         <path d="M724 46V77" />
      </g>
      <circle cx="724" cy="45" r="1.600" fill="#e4e0ff" />
      <path d="M724 46h1v3M712 73l1 3M737 73l1 3" stroke="#a08c38" strokeWidth="1.500" />
      <rect x="722" y="76" width="4" height="4" fill="#f01018" />

      {/* axis triad */}
      <path d="M753 396V388M753 396L748 398M753 396L760 399" stroke="#dcdcec" strokeWidth=".8" />
      <g fill="#dcdcec" fontSize="5" fontFamily="Roboto, sans-serif">
         <text x="752" y="388">z</text>
         <text x="745" y="401">x</text>
         <text x="760" y="401">y</text>
      </g>
   </svg>
);

const TreeScroll = () => (
   <div className="flex w-2 flex-none flex-col border-l border-[#8c8ca0] bg-[#5656b4]">
      <button type="button" aria-label="Scroll up" className="flex h-2 items-center justify-center bg-[#7474f0]">
         <svg viewBox="0 0 6 6" className="size-1"><path d="M0 5l3-4 3 4z" fill="#08081c" /></svg>
      </button>
      <span className="mt-[110px] flex-1 bg-[#7a7afc]" />
      <span className="h-[26px] bg-[#8080dc]" />
      <button type="button" aria-label="Scroll down" className="flex h-2 items-center justify-center bg-[#7474f0]">
         <svg viewBox="0 0 6 6" className="size-1"><path d="M0 1l3 4 3-4z" fill="#08081c" /></svg>
      </button>
   </div>
);

const SideTools = () => (
   <aside className="flex w-8 flex-none justify-between overflow-hidden border-l-2 border-white bg-[#cfcfe6] pt-[3px] pr-px">
      <div className="flex flex-col">
         <ToolColumn tools="yellowSolid diamondTeal frameYellow+ tentYellow blueBlob greenGear" className="h-[78px] pb-px" />
         <ToolColumn tools="textNote+ flagNote+ greySolid stamp link" className="h-[87px] pb-[21px]" />
         <ToolColumn tools="robot" className="h-[19px]" />
         <ToolColumn tools="pdf" className="h-[19px]" />
         <ToolColumn
            tools="purplePad purpleSplit purpleWedge purpleRamp purpleTeal tealTube purpleBlock+ purpleRoll purpleDoor purpleFrame purpleCluster+ purpleRing"
            className="h-[148px]"
         />
         <ToolColumn tools="orangeBlob" className="h-[19px]" />
      </div>
      <div className="flex flex-col">
         <ToolColumn tools="cursor+ walk" className="h-9 pb-[6px]" />
         <ToolColumn tools="sketch+" className="h-[19px]" />
         <ToolColumn tools="hand" className="h-[22px] pb-1" />
         <ToolColumn tools="graph" className="h-[19px]" />
         <ToolColumn tools="tealFan tealCrown orangeCrown tealFish" className="h-[69px] pb-4" />
         <ToolColumn tools="magnet+ blueDots+ globe" className="h-[50px] pb-2" />
         <ToolColumn tools="rainbow tealSpring domeLow" className="h-16 pb-[22px]" />
         <ToolColumn tools="footprints blueStairs tealNet redSheet+" className="h-[54px]" />
      </div>
   </aside>
);

const BottomToolbar = () => (
   <div className="flex h-[15px] flex-none items-center border-t border-b border-t-white border-b-[#8c8ca4] bg-linear-to-b from-[#dcdcec] to-[#c8c8e0] pl-[2px]">
      <ToolRow tools="newFile open save print cut copy paste undo+ redo+ help" className="w-[124px] pr-[2px]" />
      <ToolRow tools="formula comment bulbOff table+ treeGraph lockCube+ structure" className="w-[87px] pr-[3px]" />
      <ToolRow
         tools="fly fitAll pan rotate zoomIn zoomOut normal multiView cube+ cubeQuery+ photo photo2"
         className="w-[148px] pr-[3px]"
      />
      <ToolRow tools="swapCube" className="w-5 pr-[3px]" />
      <ToolRow tools="camera" className="w-5 pr-[3px]" />
      <ToolRow tools="axisRed" className="w-5 pr-[3px]" />
      <ToolRow tools="material+ material2+" className="w-[34px] pr-[6px]" />
      <ToolRow tools="measure measureItem weight" className="w-[47px] pr-[6px]" />
      <ToolRow tools="boxesOff catalog" className="w-[35px] pr-[6px]" />
      <ToolRow
         tools="swirl palette axes+ swap grid+ cylinder+ tealBox dashSquare branch sheetsOff listTree lensYellow+ stack eraser"
         className="w-[169px]"
      />
      <Combo label="In work object" value="RIB.2" className="min-w-0 flex-1" />
      <div className="flex w-[26px] flex-col items-center">
         <svg viewBox="0 0 16 12" className="h-[8px] w-3" aria-hidden="true">
            <path d="M4 1c4-1 5 1 2 4" fill="none" stroke="#e04040" strokeWidth="1.400" />
            <path d="M2 11l2-6c5 0 5 4-2 6" fill="none" stroke="#2c3c98" strokeWidth="1.400" />
            <path d="M14 4c-5-1-5 2-2 3s0 4-5 3" fill="none" stroke="#e07030" strokeWidth="1.400" />
         </svg>
         <span className="text-[4px] leading-[4px] font-bold text-[#2c3c98] italic">CATIA</span>
      </div>
   </div>
);

const StatusBar = () => (
   <div className="flex h-[10px] flex-none items-center bg-[#cdcde4] text-[5px] leading-none text-[#333]">
      <label htmlFor="power" className="flex-1 pl-px">Select an object or a command</label>
      <input id="power" className="h-2 w-[125px] border border-[#b4b4c8] bg-white" />
      <button type="button" aria-label="Power input" className="ml-[3px] flex h-2 w-[10px] items-center justify-center bg-[#b8b8cc]">
         <svg viewBox="0 0 8 6" className="h-1 w-[6px]"><path d="M1 1h6v4H1z" fill="#eee" stroke="#777" strokeWidth=".7" /></svg>
      </button>
      <button type="button" aria-label="Dialog" className="mr-px ml-1 flex h-2 w-[10px] items-center justify-center bg-[#c4d0e4]">
         <svg viewBox="0 0 8 8" className="size-[6px]"><circle cx="4" cy="4" r="3" fill="#2c5c8c" /><circle cx="4" cy="4" r="1.200" fill="#fff" /></svg>
      </button>
   </div>
);

const Chrome = () => (
   <svg viewBox="0 0 20 20" className="size-[10px]" aria-hidden="true">
      <circle cx="10" cy="10" r="9" fill="#f2c12c" />
      <path d="M10 10L2.200 5.500A9 9 0 0 1 18 6H10z" fill="#dc4436" />
      <path d="M2.200 5.500A9 9 0 0 0 9.500 19L13.500 12 6.500 12z" fill="#26a05c" />
      <circle cx="10" cy="10" r="4.200" fill="#fff" />
      <circle cx="10" cy="10" r="3.200" fill="#4080e8" />
   </svg>
);

const TaskButton = ({ label, open, active, children }: { label: string; open?: boolean; active?: boolean; children: ReactNode }) => (
   <button
      type="button"
      aria-label={label}
      className={clsx(
         "flex h-full flex-1 items-center justify-center border-b",
         open || active ? "border-[#76a9d8]" : "border-transparent",
         active && "bg-[#57534f]",
      )}
   >
      {children}
   </button>
);

const Taskbar = () => (
   <footer className="flex h-[17px] flex-none items-center bg-[#2e2a27] text-[5px] leading-none text-white">
      <button type="button" aria-label="Start menu" className="flex h-full w-5 items-center justify-center">
         <svg viewBox="0 0 14 14" className="size-[7px]">
            <path d="M0 2l6-1v5.500H0zM7 1l7-1v6.500H7zM0 7.500h6V13l-6-1zM7 7.500h7V14l-7-1z" fill="#fff" />
         </svg>
      </button>
      <label className="flex h-full w-[143px] items-center bg-[#f1f1f1] pl-[5px]">
         <svg viewBox="0 0 14 14" className="mr-1 size-[7px] flex-none">
            <circle cx="8.500" cy="5.500" r="4.500" fill="none" stroke="#333" strokeWidth="1.300" />
            <path d="M5 9l-4 4" stroke="#333" strokeWidth="1.300" />
         </svg>
         <input
            aria-label="Search"
            placeholder="Type here to search"
            className="w-full bg-transparent text-[6px] placeholder:text-[#444] outline-none"
         />
      </label>
      <div className="flex h-full w-[143px]">
         <TaskButton label="Cortana">
            <svg viewBox="0 0 14 14" className="size-[7px]"><circle cx="7" cy="7" r="5.500" fill="none" stroke="#fff" strokeWidth="1.800" /></svg>
         </TaskButton>
         <TaskButton label="Task view">
            <svg viewBox="0 0 14 14" className="size-[7px]"><path d="M1 0v2h8V0M1 5h8v4H1zM1 14v-2h8v2M12 0v14" fill="none" stroke="#ddd" strokeWidth="1.200" /></svg>
         </TaskButton>
         <TaskButton label="Chrome"><Chrome /></TaskButton>
         <TaskButton label="Remote desktop">
            <svg viewBox="0 0 20 20" className="size-[10px]">
               <path d="M6 3l12 2-2 9-11-2z" fill="#4cb4f0" />
               <path d="M1 13l6-1 6 3-7 2z" fill="#b8d8ec" />
            </svg>
         </TaskButton>
         <TaskButton label="Chrome window" open><Chrome /></TaskButton>
         <TaskButton label="File Explorer" open>
            <svg viewBox="0 0 20 20" className="size-[10px]">
               <path d="M1 3h7l2 2h9v12H1z" fill="#f0c448" />
               <path d="M1 8h18v9H1z" fill="#fbe08c" />
               <path d="M5 17v-5h10v5h-3v-2H8v2z" fill="#3c94dc" />
            </svg>
         </TaskButton>
         <TaskButton label="CATIA" active><CatiaMark className="size-[10px]" /></TaskButton>
      </div>
      <div className="flex h-full flex-1 items-center justify-end gap-[3px] pr-2">
         <svg viewBox="0 0 12 12" className="size-[6px]"><path d="M1 8l5-5 5 5" fill="none" stroke="#ddd" strokeWidth="1.500" /></svg>
         <svg viewBox="0 0 12 12" className="size-[7px]"><path d="M1 9c0-4 3-5 5-3 3-2 5 1 5 3zM1 1l10 10" fill="#aaa" stroke="#ddd" /></svg>
         <svg viewBox="0 0 12 12" className="size-[7px]"><path d="M3 2h8v6H3zM5 10h4M1 2v8h3" fill="none" stroke="#ddd" strokeWidth="1.300" /></svg>
         <svg viewBox="0 0 12 12" className="size-[7px]"><path d="M1 4h2l3-3v10L3 8H1zM8 4c1 1 1 3 0 4M10 2c2 2 2 6 0 8" fill="none" stroke="#ddd" strokeWidth="1.100" /></svg>
         <span>ENG</span>
         <time className="ml-[3px] text-center leading-[8px]">
            <span className="block">15:21</span>
            <span className="block">17-02-2021</span>
         </time>
         <button type="button" aria-label="Notifications" className="ml-1">
            <svg viewBox="0 0 20 20" className="size-[10px]">
               <path d="M2 2h14v11H9l-3 3v-3H2z" fill="#f4f4f4" />
               <path d="M4 5h10M4 8h10" stroke="#777" />
               <circle cx="14" cy="14" r="5" fill="#3c3835" stroke="#ccc" />
            </svg>
         </button>
      </div>
   </footer>
);

export default function App() {
   return (
      <div className="relative flex h-screen flex-col overflow-hidden bg-[#cdcde4] font-['Roboto','Open_Sans',sans-serif]">
         <TitleBar />
         <MenuBar />
         <TopToolbar />
         <div className="flex min-h-0 flex-1">
            <TreeScroll />
            <main className="relative min-w-0 flex-1 overflow-hidden bg-linear-to-b from-[#333364] from-0% via-[#454576] via-60% to-[#a0a0bb]">
               <Model />
               <div className="relative h-full">
                  <Tree />
               </div>
            </main>
            <SideTools />
         </div>
         <BottomToolbar />
         <StatusBar />
         <Taskbar />

         {/* Windows activation notice, floats over everything */}
         <div className="pointer-events-none absolute right-9 bottom-[38px] w-[98px] whitespace-nowrap">
            <p className="text-[8px] leading-[10px] text-[#a2a2b6]">Activate Windows</p>
            <p className="text-[6px] leading-[8px] text-[#c0c0cc]">Go to Settings to activate Windows.</p>
         </div>
      </div>
   );
}
